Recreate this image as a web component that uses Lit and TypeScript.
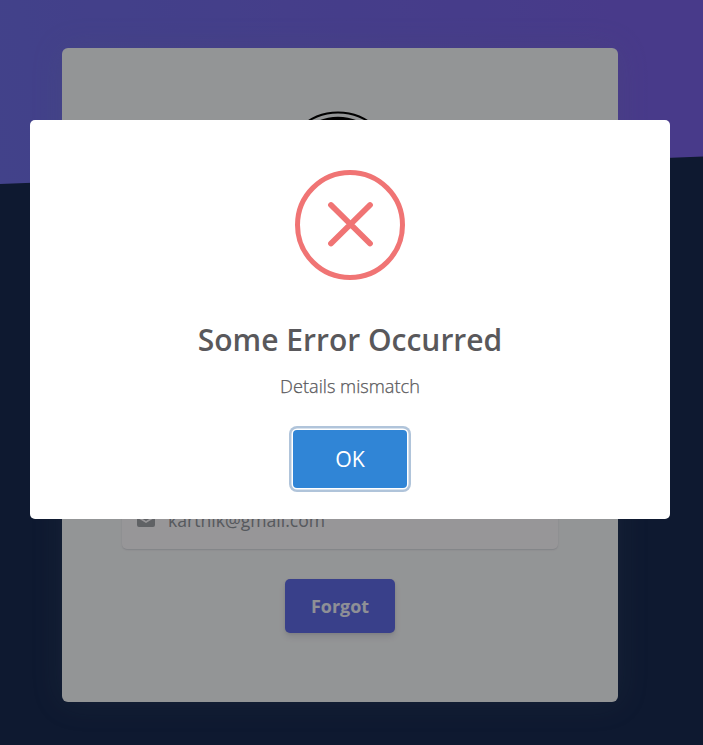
import { LitElement, html, css } from "lit";
import { customElement } from "lit/decorators.js";

@customElement("forgot-card")
class ForgotCard extends LitElement {
  static styles = css`
    :host {
      box-sizing: border-box;
      display: flex;
      flex-direction: column;
      align-items: center;
      width: 556px;
      height: 654px;
      margin: 48px 0 0 62px;
      padding: 63px 60px 69px;
      border-radius: 6px;
      background: #f6f8fa;
      box-shadow: 0 0 32px rgba(136, 152, 170, 0.15);
    }
    .logo { display: block; width: 114px; height: 114px; }
    .field {
      box-sizing: border-box;
      display: flex;
      align-items: center;
      width: 436px;
      height: 54px;
      margin-top: auto;
      padding: 0 15px 4px;
      gap: 13px;
      border-radius: 5px;
      background: #fcfafd;
      box-shadow: 0 1px 2px rgba(50, 50, 93, 0.12), 0 1px 0 rgba(0, 0, 0, 0.03);
      color: #8f949c;
      font-size: 17.6px;
    }
    .mail { width: 18px; height: 14px; flex: none; fill: #a0a3a9; }
    .send {
      width: 110px;
      height: 54px;
      margin-top: 30px;
      padding: 0;
      border: 0;
      border-radius: 5px;
      background: #606ce6;
      color: #eef0fa;
      font: 700 17.9px "Open Sans", sans-serif;
      box-shadow: 0 4px 6px rgba(50, 50, 93, 0.12), 0 1px 3px rgba(0, 0, 0, 0.08);
    }
  `;
  render() {
    return html`
      <svg class="logo" viewBox="0 0 114 114">
        <circle cx="55" cy="56.500" r="55" fill="none" stroke="#000" stroke-width="2.2" />
        <circle cx="55" cy="56.500" r="50.8" fill="#000" />
      </svg>
      <div class="field">
        <svg class="mail" viewBox="0 0 18 14">
          <path d="M2 0H16Q18 0 18 2V2.6L9 8 0 2.6V2Q0 0 2 0ZM0 4.5L9 10 18 4.5V12Q18 14 16 14H2Q0 14 0 12Z" />
        </svg>
        <span>karthik@gmail.com</span>
      </div>
      <button class="send">Forgot</button>
    `;
  }
}

@customElement("error-dialog")
class ErrorDialog extends LitElement {
  static styles = css`
    :host {
      box-sizing: border-box;
      display: flex;
      flex-direction: column;
      align-items: center;
      width: 640px;
      height: 399px;
      margin: 120px 0 0 30px;
      padding-top: 50px;
      border-radius: 5px;
      background: #fff;
      color: #59585b;
    }
    .cross { width: 110px; height: 110px; fill: none; stroke: #f07474; stroke-width: 5; }
    h2 { margin: 39px 0 0; font-size: 30px; line-height: 42px; font-weight: 600; }
    p {
      margin: 12px 0 0;
      font-size: 18.2px;
      line-height: 26px;
      font-weight: 300;
      -webkit-text-stroke: 0.25px currentColor;
    }
    .ok {
      width: 114px;
      height: 58px;
      margin-top: 31px;
      padding: 0 0 1px;
      border: 0;
      border-radius: 4px;
      background: #3085d6;
      color: #fff;
      font: 400 21.3px "Open Sans", sans-serif;
      box-shadow: 0 0 0 1.5px #fff, 0 0 0 4px #b0c4da;
    }
  `;
  render() {
    return html`
      <svg class="cross" viewBox="0 0 110 110">
        <circle cx="55" cy="55" r="52.5" />
        <path d="M36 35L75 73.500M75 35L36 73.500" stroke-width="5.8" stroke-linecap="round" />
      </svg>
      <h2>Some Error Occurred</h2>
      <p>Details mismatch</p>
      <button class="ok">OK</button>
    `;
  }
}

@customElement("app-root")
class AppRoot extends LitElement {
  static styles = css`
    :host {
      display: block;
      position: relative;
      height: 745px;
      overflow: hidden;
      background: #182a50;
      font-family: "Open Sans", sans-serif;
    }
    .header {
      position: absolute;
      inset: 0 0 auto;
      height: 184px;
      background: linear-gradient(78deg, #6e6ee6, #7961e6 95%);
      clip-path: polygon(0 0, 100% 0, 100% 156.500px, 0 100%);
    }
    forgot-card { position: relative; }
    .overlay {
      position: absolute;
      inset: 0;
      display: flex;
      align-items: flex-start;
      background: rgba(0, 0, 0, 0.4);
    }
  `;
  render() {
    return html`
      <div class="header"></div>
      <forgot-card></forgot-card>
      <div class="overlay"><error-dialog></error-dialog></div>
    `;
  }
}
